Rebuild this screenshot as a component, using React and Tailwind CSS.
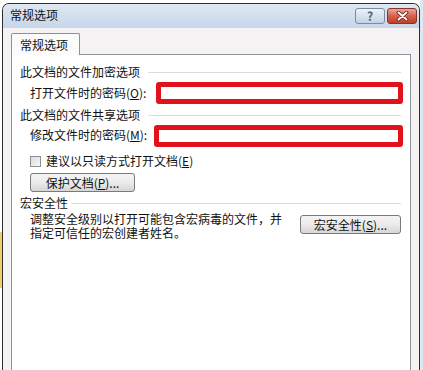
import React from 'react';

// Win7-style "常规选项" dialog with the two password fields marked in red

const FONT = "font-['Noto_Sans_CJK_SC','Noto_Sans',sans-serif]";

const Heading = ({ children, gap = 'ml-2' }) => (
  <div className="flex items-center h-[14px] leading-[14px]">
    <span>{children}</span>
    <div className={`flex-1 h-px bg-[#d6dde4] mr-[2px] ${gap}`} />
  </div>
);

const Button = ({ children, className = '' }) => (
  <div
    className={`h-[19px] border border-[#7a7a7a] rounded-[3px] bg-linear-to-b from-[#f4f4f4] via-[#ebebeb] to-[#d6d6d6] flex items-center justify-center leading-[14px] ${className}`}
  >
    {children}
  </div>
);

const RedBox = () => (
  <div className="flex-1 h-[22px] border-[5px] border-[#e2121c] rounded-[3px] bg-white" />
);

export default function App() {
  return (
    <div className={`w-[423px] h-[370px] bg-white flex overflow-hidden text-[12px] text-[#111] ${FONT}`}>
      {/* whatever lies behind the dialog */}
      <div className="w-[2px] pt-[232px]">
        <div className="h-[56px] bg-[#efd06a]" />
      </div>

      {/* ── Window ── */}
      <div className="w-[418px] mt-[3px] border border-[#2e2e2e] border-b-0 rounded-t-[7px] overflow-hidden flex flex-col bg-[#f4f2f3]">
        {/* Title bar */}
        <div className="h-[24px] shrink-0 flex items-center pl-[7px] pr-[2px] bg-linear-to-b from-[#dfe8f3] to-[#c6d6e9]">
          <span className="flex-1 leading-[14px] -mt-[2px]">常规选项</span>
          <div className="w-[30px] h-[16px] rounded-[3px] border border-[#7d8ba0] bg-linear-to-b from-[#eef3f9] to-[#c3d2e4] flex items-center justify-center text-[12px] font-bold text-[#4a5f7c] leading-none">
            ?
          </div>
          <div className="w-[30px] h-[16px] ml-[2px] rounded-[3px] border border-[#86362a] bg-linear-to-b from-[#eba595] via-[#d6604a] to-[#c23d27] flex items-center justify-center">
            <svg width="13" height="10" viewBox="0 0 13 10">
              <path d="M2.5 1.5 L10.5 8.5 M10.5 1.5 L2.5 8.5" stroke="#5a1c14" strokeWidth="3.6" strokeLinecap="round" />
              <path d="M2.5 1.5 L10.5 8.5 M10.5 1.5 L2.5 8.5" stroke="#ffffff" strokeWidth="2" strokeLinecap="round" />
            </svg>
          </div>
        </div>

        {/* Body */}
        <div className="flex-1 flex flex-col pl-[8px] pr-[8px] pt-[5px]">
          {/* Tab */}
          <div className="w-[69px] h-[22px] -mb-px relative border border-b-0 border-[#8b9099] rounded-t-[2px] bg-[#fbfbfb] flex items-center pl-[8px] leading-[14px]">
            常规选项
          </div>

          {/* Tab page */}
          <div className="flex-1 border border-b-0 border-[#8b9099] bg-white pl-[8px] pr-[7px] pt-[10px] flex flex-col">
            <Heading gap="ml-[8px]">此文档的文件加密选项</Heading>

            <div className="mt-[3px] flex items-center pl-[10px]">
              <span className="w-[126px] leading-[14px] -mt-[1px]">
                打开文件时的密码(<u>O</u>):
              </span>
              <RedBox />
            </div>

            <div className="mt-[4px]">
              <Heading gap="ml-[8px]">此文档的文件共享选项</Heading>
            </div>

            <div className="mt-[3px] flex items-center pl-[10px]">
              <span className="w-[124px] leading-[14px] -mt-[2px]">
                修改文件时的密码(<u>M</u>):
              </span>
              <RedBox />
            </div>

            <div className="mt-[7px] flex items-center pl-[10px] h-[14px]">
              <div className="w-[11px] h-[11px] border border-[#8e8f8f] bg-linear-to-br from-[#dcdcdc] to-[#f7f7f7]" />
              <span className="ml-[5px] leading-[14px]">
                建议以只读方式打开文档(<u>E</u>)
              </span>
            </div>

            <div className="mt-[5px] pl-[10px]">
              <Button className="w-[105px]">
                保护文档(<u>P</u>)...
              </Button>
            </div>

            <div className="mt-[4px]">
              <Heading gap="ml-[3px]">宏安全性</Heading>
            </div>

            <div className="mt-[2px] flex items-start justify-between pl-[10px] pr-[2px]">
              <div className="w-[262px] leading-[14px]">
                调整安全级别以打开可能包含宏病毒的文件，并
                <br />
                指定可信任的宏创建者姓名。
              </div>
              <Button className="w-[101px] mt-[3px]">
                宏安全性(<u>S</u>)...
              </Button>
            </div>
          </div>
        </div>
      </div>

      {/* right edge of the desktop */}
      <div className="flex-1 bg-[#dfe8f2]" />
    </div>
  );
}
